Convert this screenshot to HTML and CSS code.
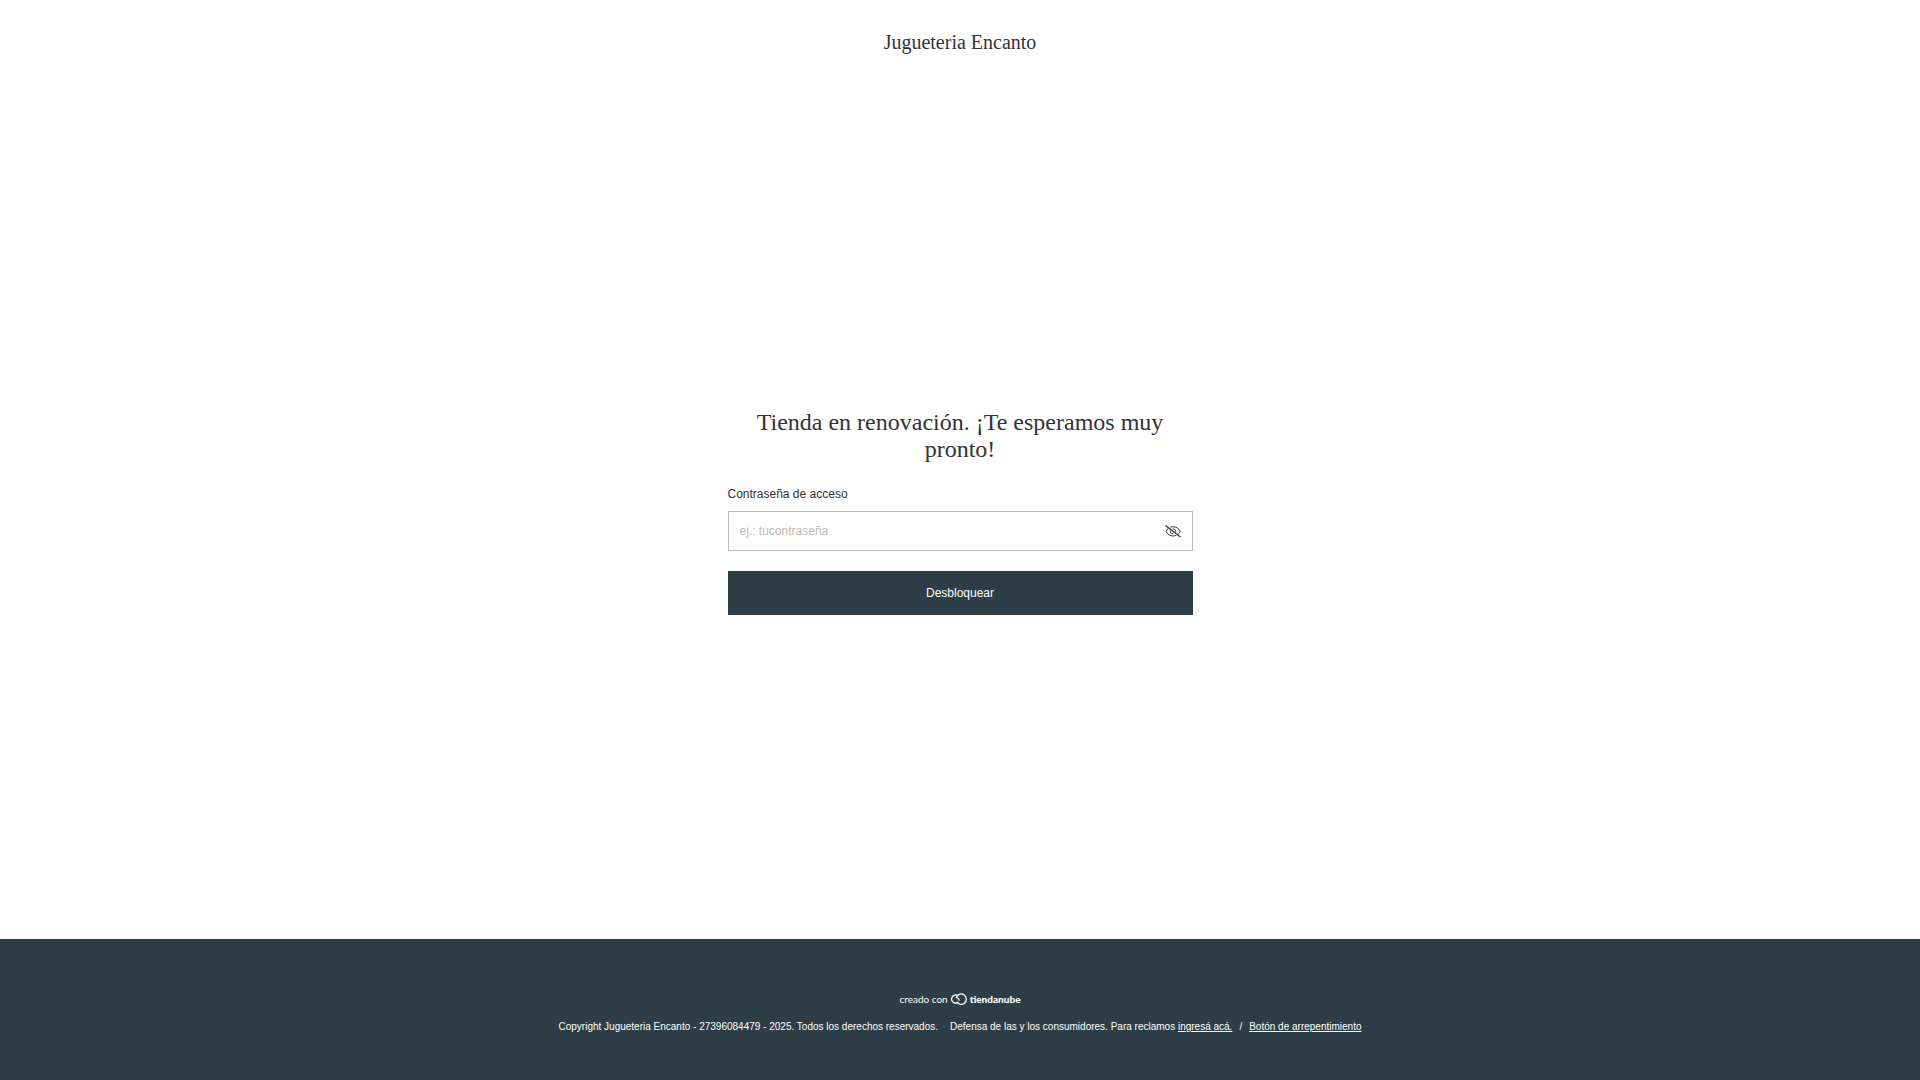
FILE: index.html
```html
<!DOCTYPE html>
<html lang="es">
<head>
<meta charset="utf-8">
<meta name="viewport" content="width=device-width, initial-scale=1">
<title>Jugueteria Encanto</title>
<link rel="stylesheet" href="styles.css">
</head>
<body>
<header class="header">
  <div class="store-name">Jugueteria Encanto</div>
</header>
<main class="main">
  <form class="unlock">
    <h1 class="title">Tienda en renovación. ¡Te esperamos muy pronto!</h1>
    <label class="label" for="password">Contraseña de acceso</label>
    <div class="field">
      <input class="input" type="password" id="password" placeholder="ej.: tucontraseña">
      <button class="toggle" type="button" aria-label="Mostrar contraseña">
        <svg class="eye" viewBox="0 0 16 14" fill="none" stroke="currentColor" aria-hidden="true">
          <path d="M3.200 4.300C2.200 5.300 1.500 6.500 1.200 7.500c1 2.300 3.600 4.500 6.900 4.500 1.200 0 2.300-.3 3.200-.7M5.500 3.200c.8-.3 1.600-.5 2.600-.5 3.300 0 6 2.200 7.200 4.800-.4 1-1.200 2-2.200 2.700"/>
          <path d="M5.300 6.500c-.6 2 .9 3.500 3 3.300M7.700 5c2-.2 3.300 1.200 3 3"/>
          <path d="M.5 1.500 15.500 13" stroke-width="1.300"/>
        </svg>
      </button>
    </div>
    <button class="submit" type="submit">Desbloquear</button>
  </form>
</main>
<footer class="footer">
  <a class="powered" href="#" aria-label="creado con tiendanube">
    <span class="powered-by">creado con</span>
    <svg class="cloud" viewBox="0 0 16 12" fill="none" stroke="currentColor" stroke-width="1.300" aria-hidden="true">
      <path d="M5.400 4A5.200 5.200 0 1 1 5.700 8.900"/>
      <path d="M7 2.800A4 4 0 1 0 7.400 9M4.700 4.700C6.600 4.100 8.200 5.500 8.100 7.600"/>
    </svg>
    <span class="brand">tiendanube</span>
  </a>
  <div class="legal">
    <span>Copyright Jugueteria Encanto - 27396084479 - 2025. Todos los derechos reservados.</span>
    <span>Defensa de las y los consumidores. Para reclamos <a class="link" href="#">ingresá acá.</a><span class="slash">/</span><a class="link" href="#">Botón de arrepentimiento</a></span>
  </div>
</footer>
</body>
</html>
```
FILE: styles.css
```css
* {
  box-sizing: border-box;
}

body {
  display: flex;
  flex-direction: column;
  min-height: 100vh;
  margin: 0;
  background: #fefefe;
  color: #333;
  font-family: "Liberation Sans", Arial, sans-serif;
  font-size: 12px;
}

.header {
  padding: 30px 16px;
  text-align: center;
}

.store-name {
  font-family: "Liberation Serif", "Times New Roman", serif;
  font-size: 20px;
  line-height: 24px;
}

.main {
  display: flex;
  flex: 1;
  align-items: center;
  justify-content: center;
  padding: 0 16px;
}

.unlock {
  width: 100%;
  max-width: 465px;
}

.title {
  margin: 0 0 24px;
  font-family: "Liberation Serif", "Times New Roman", serif;
  font-size: 24px;
  font-weight: 400;
  line-height: 27px;
  text-align: center;
}

.label {
  display: block;
  margin-bottom: 10px;
  line-height: 14px;
}

.field {
  display: flex;
  height: 40px;
  margin-bottom: 20px;
  border: 1px solid #bbb;
}

.input {
  flex: 1;
  min-width: 0;
  padding: 0 11px;
  border: 0;
  outline: 0;
  background: transparent;
  color: inherit;
  font: inherit;
}

.input::placeholder {
  color: #bbb;
  opacity: 1;
}

.toggle {
  display: flex;
  align-items: center;
  padding: 0 11px;
  border: 0;
  background: transparent;
  color: #333;
}

.eye {
  width: 16px;
  height: 14px;
}

.submit {
  display: block;
  width: 100%;
  height: 44px;
  border: 0;
  background: #2e3e46;
  color: #fefefe;
  font: inherit;
}

.footer {
  display: flex;
  flex-direction: column;
  align-items: center;
  gap: 15px;
  padding: 54px 16px 46px;
  background: #2e3e46;
  color: #fefefe;
  font-size: 10px;
  line-height: 14px;
}

.powered {
  display: flex;
  align-items: center;
  gap: 3px;
  color: inherit;
  font-family: Lato, sans-serif;
  line-height: 12px;
  text-decoration: none;
}

.cloud {
  width: 16px;
  height: 12px;
}

.brand {
  font-weight: 900;
}

.legal {
  display: flex;
  flex-wrap: wrap;
  justify-content: center;
  column-gap: 12px;
}

.link {
  color: inherit;
}

.slash {
  margin: 0 7px;
}
```
